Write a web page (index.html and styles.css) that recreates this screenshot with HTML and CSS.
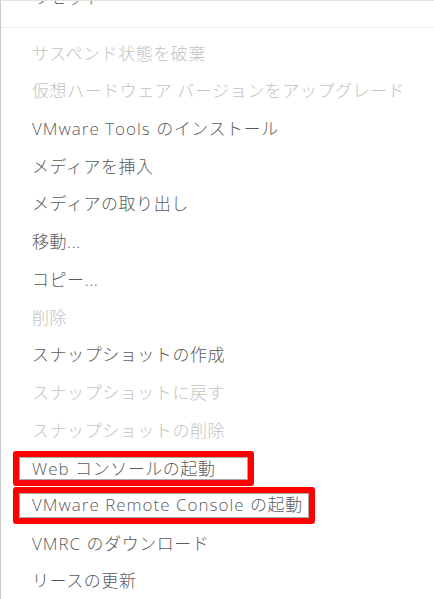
FILE: index.html
```html
<!DOCTYPE html>
<html lang="ja">
<head>
<meta charset="utf-8">
<link rel="stylesheet" href="styles.css">
</head>
<body>
<div class="menu">
  <div class="menu-inner">
    <div class="item">リセット</div>
    <div class="divider"></div>
    <div class="item disabled">サスペンド状態を破棄</div>
    <div class="item disabled">仮想ハードウェア バージョンをアップグレード</div>
    <div class="item"><span class="lat">VMware Tools </span>のインストール</div>
    <div class="item">メディアを挿入</div>
    <div class="item">メディアの取り出し</div>
    <div class="item">移動...</div>
    <div class="item">コピー...</div>
    <div class="item disabled">削除</div>
    <div class="item">スナップショットの作成</div>
    <div class="item disabled">スナップショットに戻す</div>
    <div class="item disabled">スナップショットの削除</div>
    <div class="item hl-row"><span class="hl hl-web"><span class="lat">Web </span>コンソールの起動</span></div>
    <div class="item hl-row"><span class="hl hl-vmrc"><span class="lat">VMware Remote Console </span>の起動</span></div>
    <div class="item"><span class="lat">VMRC </span>のダウンロード</div>
    <div class="item">リースの更新</div>
  </div>
</div>
</body>
</html>
```
FILE: styles.css
```css
html, body {
  margin: 0;
  padding: 0;
  background: #fff;
}
body {
  width: 434px;
  height: 599px;
  overflow: hidden;
}
.menu {
  height: 599px;
  overflow: hidden;
  border-left: 1px solid #c9c9c9;
  border-top: 1px solid #e3e3e3;
  box-sizing: border-box;
  font-family: "Open Sans", "Noto Sans CJK JP", sans-serif;
  font-weight: 300;
  font-size: 17px;
  letter-spacing: 0.55px;
  color: #5c5c5c;
}
.menu-inner {
  margin-top: -22px;
}
.item {
  height: 37.7px;
  line-height: 37.7px;
  padding-left: 31px;
  white-space: nowrap;
}
.lat {
  letter-spacing: 1px;
}
.item.disabled {
  color: #c3c3c3;
}
.divider {
  height: 1px;
  background: #ececec;
  margin: 10px 0 7px;
}
.item.hl-row {
  padding-left: 12px;
  display: flex;
  align-items: center;
}
.hl {
  display: block;
  box-sizing: border-box;
  border: 6px solid #ff0000;
  border-radius: 3px;
  box-shadow: inset 0 0 0 1px #a9a9a9;
  padding-left: 13px;
  line-height: 24px;
}
.hl-web {
  width: 241px;
  height: 35px;
}
.hl-vmrc {
  width: 302px;
  height: 37px;
}
```
